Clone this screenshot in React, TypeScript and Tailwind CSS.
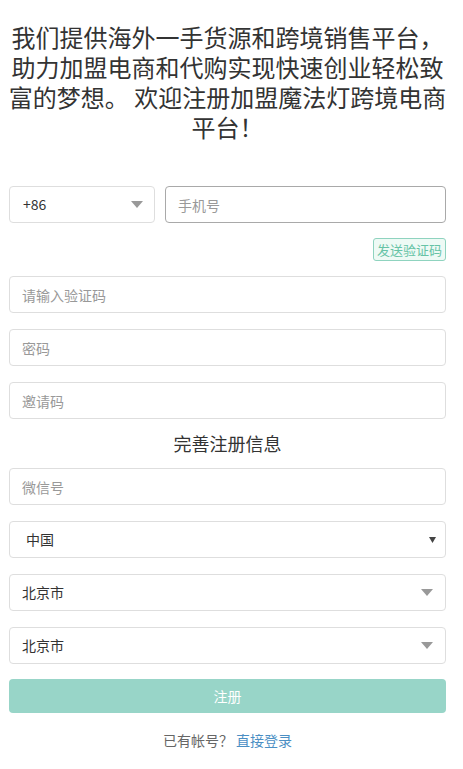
import React from 'react'

const font = { fontFamily: '"Noto Sans CJK SC", "Noto Sans", sans-serif' }

function Caret({ className }: { className?: string }) {
  return (
    <svg width="12" height="7" viewBox="0 0 12 7" className={className}>
      <path d="M0 0 L12 0 L6 7 Z" fill="#999" />
    </svg>
  )
}

function TextField({ placeholder, dark }: { placeholder: string; dark?: boolean }) {
  return (
    <input
      type="text"
      placeholder={placeholder}
      className={`h-[37px] w-full rounded-[4px] border bg-white px-[12px] text-[14px] text-[#333] outline-none placeholder:text-[#999] ${
        dark ? 'border-[#a9a9a9]' : 'border-[#dedede]'
      }`}
    />
  )
}

function FakeSelect({ value }: { value: string }) {
  return (
    <div className="flex h-[37px] w-full items-center justify-between rounded-[4px] border border-[#dedede] bg-white pl-[12px] pr-[12px] text-[14px] text-[#333]">
      <span>{value}</span>
      <Caret />
    </div>
  )
}

export default function App() {
  return (
    <div className="min-h-screen bg-white" style={font}>
      {/* intro */}
      <div className="pl-[8px] pr-[16px] pt-[22px]">
        <h1 className="text-center text-[24px] font-normal leading-[30px] text-[#333]">
          我们提供海外一手货源和跨境销售平台，助力加盟电商和代购实现快速创业轻松致富的梦想。 欢迎注册加盟魔法灯跨境电商平台！
        </h1>
      </div>

      <div className="pl-[9px] pr-[17px]">
        {/* phone row */}
        <div className="mt-[44px] flex gap-[10px]">
          <div className="flex h-[37px] w-[146px] shrink-0 items-center justify-between rounded-[4px] border border-[#dedede] bg-white pl-[13px] pr-[11px] text-[14px] text-[#333]">
            <span>+86</span>
            <Caret />
          </div>
          <TextField placeholder="手机号" dark />
        </div>

        <div className="mt-[15px] flex justify-end">
          <button className="h-[23px] rounded-[3px] border border-[#8fd3bf] bg-[#eefaf5] px-[3px] text-[13px] leading-[21px] text-[#66c3a6]">
            发送验证码
          </button>
        </div>

        <div className="mt-[15px] flex flex-col gap-[16px]">
          <TextField placeholder="请输入验证码" />
          <TextField placeholder="密码" />
          <TextField placeholder="邀请码" />
        </div>

        <div className="flex h-[49px] items-center justify-center text-[18px] text-[#333]">完善注册信息</div>

        <div className="flex flex-col gap-[16px]">
          <TextField placeholder="微信号" />
          <div className="flex h-[37px] w-full items-center justify-between rounded-[4px] border border-[#dedede] bg-white pl-[16px] pr-[9px] text-[14px] text-[#333]">
            <span>中国</span>
            <svg width="7" height="6" viewBox="0 0 7 6">
              <path d="M0 0 L7 0 L3.5 6 Z" fill="#444" />
            </svg>
          </div>
          <FakeSelect value="北京市" />
          <FakeSelect value="北京市" />
        </div>

        <button className="mt-[15px] flex h-[34px] w-full items-center justify-center rounded-[4px] bg-[#98d5c8] text-[14px] text-white">
          注册
        </button>

        <p className="mt-[17px] text-center text-[14px] leading-[20px] text-[#666]">
          已有帐号？ <a className="text-[#4b8fc4]">直接登录</a>
        </p>
      </div>
    </div>
  )
}
